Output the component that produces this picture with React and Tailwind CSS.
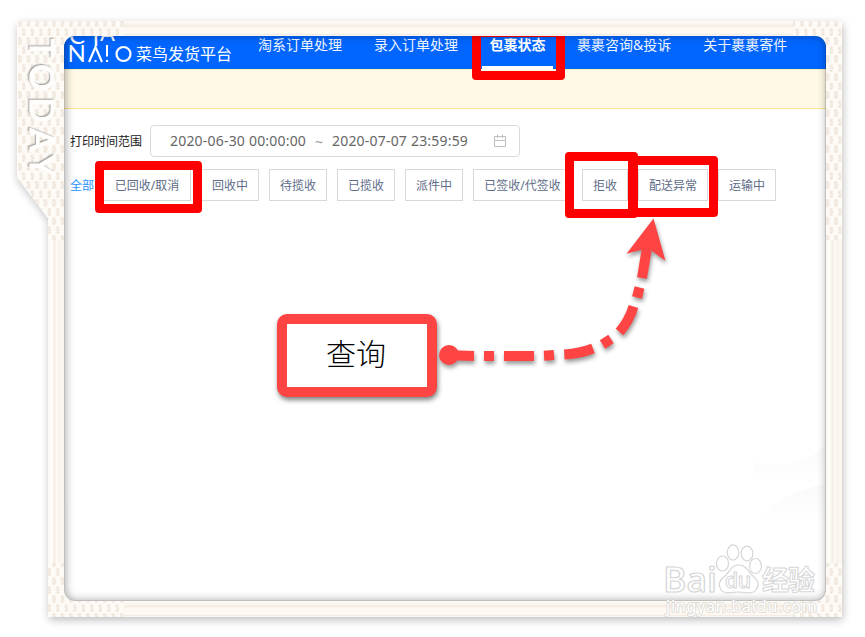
import React from "react"
import clsx from "clsx"

const navItems = [
  { label: "淘系订单处理", space: "ml-0" },
  { label: "录入订单处理", space: "ml-8" },
  { label: "包裹状态", space: "ml-[24px]", active: true },
  { label: "裹裹咨询&投诉", space: "ml-6" },
  { label: "关于裹裹寄件", space: "ml-8" },
]

const filters = [
  { label: "已回收/取消", width: "w-[88px]" },
  { label: "回收中", width: "w-[58px]" },
  { label: "待揽收", width: "w-[58px]" },
  { label: "已揽收", width: "w-[58px]" },
  { label: "派件中", width: "w-[58px]" },
  { label: "已签收/代签收", width: "w-[99px]" },
  { label: "拒收", width: "w-[46px]" },
  { label: "配送异常", width: "w-[70px]" },
  { label: "运输中", width: "w-[58px]" },
]

// Paper photo frame around the page
function PhotoFrame() {
  const outline =
    "M19 21H840Q842 21 842 23V615Q842 617 840 617H50Q48 617 48 615V218L17 177V23Q17 21 19 21Z"
  return (
    <svg className="absolute inset-0" width="865" height="637" viewBox="0 0 865 637">
      <defs>
        <filter id="frameShadow" x="-5%" y="-5%" width="110%" height="112%">
          <feDropShadow dx="1" dy="3" stdDeviation="4" floodColor="#000" floodOpacity="0.26" />
        </filter>
        {/* offsets follow the rotated letters: the shade falls up and to the left */}
        <filter id="letterShadow" x="-10%" y="-30%" width="120%" height="160%">
          <feDropShadow dx="-1.3" dy="1.3" stdDeviation="0.7" floodColor="#777" floodOpacity="0.6" />
        </filter>
        <pattern id="weave" width="8.500" height="18" patternUnits="userSpaceOnUse">
          <g fill="#f5eee6">
            <rect x="1" y="1" width="4" height="8" rx="1" />
            <rect x="5.200" y="10" width="3.300" height="8" rx="1" />
          </g>
          <g fill="#e8ddd1">
            <rect x="1.500" y="2" width="1" height="1.500" />
            <rect x="3.500" y="4" width="1" height="1.500" />
            <rect x="2" y="6.500" width="1.500" height="1" />
            <rect x="5.500" y="11.500" width="1" height="1.500" />
            <rect x="7.200" y="13.500" width="1" height="1.500" />
            <rect x="6" y="16" width="1.500" height="1" />
          </g>
        </pattern>
        <linearGradient id="grainX" x1="0" x2="1" y1="0" y2="0">
          <stop offset="0" stopColor="#fbf8f3" />
          <stop offset="0.2" stopColor="#fffefa" />
          <stop offset="0.3" stopColor="#fcf8f2" />
          <stop offset="0.42" stopColor="#f4ede5" />
          <stop offset="0.52" stopColor="#fefaf4" />
          <stop offset="0.75" stopColor="#f8f2ea" />
          <stop offset="0.88" stopColor="#fdf9f3" />
          <stop offset="1" stopColor="#f7f1ea" />
        </linearGradient>
        <linearGradient id="grainY" x1="0" x2="0" y1="0" y2="1">
          <stop offset="0" stopColor="#fefcf7" />
          <stop offset="0.22" stopColor="#f9f4ed" />
          <stop offset="0.32" stopColor="#f3ebe1" />
          <stop offset="0.45" stopColor="#fdf8f0" />
          <stop offset="0.8" stopColor="#fffbf5" />
          <stop offset="0.9" stopColor="#f4ede5" />
          <stop offset="1" stopColor="#fdf9f4" />
        </linearGradient>
      </defs>
      <path d={outline} fill="#fefbf7" filter="url(#frameShadow)" />
      <path d={outline} fill="url(#weave)" />
      <rect x="124" y="21" width="669" height="15" fill="url(#grainY)" />
      <rect x="124" y="601" width="669" height="16" fill="url(#grainY)" />
      <rect x="48" y="240" width="16" height="323" fill="url(#grainX)" />
      <rect x="826" y="240" width="16" height="323" fill="url(#grainX)" />
      <text
        transform="translate(30 39) rotate(90)"
        textLength="137"
        fontFamily="Lato, sans-serif"
        fontSize="33"
        fill="#fffefc"
        stroke="#fffefc"
        strokeWidth="1.200"
        filter="url(#letterShadow)"
      >
        TODAY
      </text>
    </svg>
  )
}

function Logo() {
  return (
    <svg
      width="71"
      height="33"
      viewBox="64 36 71 33"
      className="shrink-0"
      fill="#fff"
      fontFamily="Lato, sans-serif"
      fontSize="24"
    >
      <text x="69" y="43.500">C</text>
      <text x="92.500" y="45.500">I</text>
      <text x="100" y="40.500" fontSize="22">A</text>
      <text x="67.600" y="62">N</text>
      <path d="M89 62L95.500 47L102 62" fill="none" stroke="#fff" strokeWidth="2.100" />
      <path d="M106 45h2v11.500h-2zM106 60h2v2h-2zM94.500 60h2v2h-2z" />
      <circle cx="123.500" cy="54" r="7" fill="none" stroke="#fff" strokeWidth="2.200" />
    </svg>
  )
}

function CalendarIcon() {
  return (
    <svg width="14" height="14" viewBox="0 0 14 14" fill="none" stroke="#bfbfbf">
      <path d="M1.500 2.500H12.500V12.500H1.500ZM1.500 6.500H12.500M4.500 0.500V4M9.500 0.500V4" />
    </svg>
  )
}

function Header() {
  return (
    <header className="flex h-[33px] bg-[#0066ff] text-white">
      <Logo />
      <span className="mt-1.5 ml-px w-[122px] shrink-0 text-[16px] leading-6 whitespace-nowrap">
        菜鸟发货平台
      </span>
      <nav className="flex">
        {navItems.map((item) => (
          <a
            key={item.label}
            className={clsx(
              "flex h-[34px] flex-col justify-between text-[14px] leading-[18px] whitespace-nowrap",
              item.space,
              item.active ? "w-[71px] items-center font-bold" : "text-[#f2f7ff]"
            )}
          >
            <span>{item.label}</span>
            {item.active && <i className="relative z-10 block h-1 w-full shrink-0 bg-white" />}
          </a>
        ))}
      </nav>
    </header>
  )
}

function Watermark() {
  return (
    <svg className="absolute inset-0" width="865" height="637" viewBox="0 0 865 637">
      <defs>
        <linearGradient id="swoosh" x1="0" x2="0" y1="0" y2="1">
          <stop offset="0" stopColor="#000" stopOpacity="0.022" />
          <stop offset="1" stopColor="#000" stopOpacity="0" />
        </linearGradient>
      </defs>
      <path d="M754 462Q795 474 825 446V484H754Z" fill="url(#swoosh)" />
      <path d="M754 525Q772 496 825 484V525Z" fill="url(#swoosh)" />
      <g fill="#fff" stroke="#d6d6d6" strokeWidth="1.200">
        <text x="663" y="592" textLength="54" fontFamily="Open Sans, sans-serif" fontSize="34" fontWeight="600" lengthAdjust="spacingAndGlyphs">
          Bai
        </text>
        <ellipse cx="722.500" cy="563.500" rx="6" ry="7.500" />
        <ellipse cx="733" cy="552.500" rx="5.700" ry="7.700" />
        <ellipse cx="747" cy="553.500" rx="5.900" ry="7.400" />
        <ellipse cx="755.500" cy="566" rx="5.900" ry="7.500" />
        <path d="M738.500 565C731 565 730 572 725 576C719 580 718 585 721 590C725 595 732 592 738.500 592C745 592 752 595 756 590C760 585 758 580 753 576C748 572 747 565 738.500 565Z" />
        <text x="725" y="588" textLength="26" fontFamily="Open Sans, sans-serif" fontSize="21" fontWeight="600" strokeWidth="1">
          du
        </text>
        <text x="762" y="590" textLength="53" fontFamily="Noto Sans CJK SC, sans-serif" fontSize="27" fontWeight="bold" strokeWidth="1">
          经验
        </text>
        <text x="666" y="612" textLength="151" fontFamily="Noto Sans, sans-serif" fontSize="16" stroke="#dcd8d3" strokeWidth="1.600" paintOrder="stroke">
          jingyan.baidu.com
        </text>
      </g>
    </svg>
  )
}

function Arrow() {
  return (
    <svg
      className="absolute inset-0 drop-shadow-[1px_3px_2px_rgba(0,0,0,0.4)]"
      width="865"
      height="637"
      viewBox="0 0 865 637"
    >
      <g fill="none" stroke="#ff4444" strokeWidth="10">
        <path d="M452 355.300L474 356" />
        <path d="M484 356H494M504 356H534M544 355.700L554 355" />
        <path d="M564.300 354.500Q580 353.500 593 348.500" />
        <path d="M602.500 344.500L611 339" />
        <path d="M619.500 332Q629 321 633.500 306.500" />
        <path d="M637 297.500L639.500 287.500" />
        <path d="M642 278L647.300 246" />
      </g>
      <circle cx="449" cy="355" r="10" fill="#ff4444" />
      <path d="M653.500 218.500L665.500 261L648 248L626.500 253.800Z" fill="#ff4444" />
    </svg>
  )
}

function Marks() {
  return (
    <>
      <div className="absolute top-[28px] left-[472px] h-[52px] w-[93px] rounded-[4px] border-[9px] border-[#ff0000] [clip-path:inset(8px_0_0_0)]" />
      <div className="absolute top-[161px] left-[95px] h-[52px] w-[107px] rounded-[4px] border-[9px] border-[#ff0000]" />
      <div className="absolute top-[156px] left-[629px] h-[61px] w-[89px] rounded-[4px] border-[9px] border-[#ff0000]" />
      <div className="absolute top-[152px] left-[565px] h-[66px] w-[73px] rounded-[4px] border-[9px] border-r-[10px] border-[#ff0000]" />
      <div className="absolute top-[314px] left-[277px] flex h-[83px] w-[160px] items-center justify-center rounded-[10px] border-[10px] border-[#ff4444] bg-white pr-0.5 pb-1 text-[30px] font-light text-black shadow-[1px_3px_5px_rgba(0,0,0,0.5)]">
        查询
      </div>
    </>
  )
}

export default function App() {
  return (
    <div className="relative h-[637px] w-[865px] overflow-hidden bg-white pt-[36px] pl-[64px] font-['Noto_Sans','Noto_Sans_CJK_SC',sans-serif]">
      <PhotoFrame />
      <main className="relative h-[565px] w-[762px] overflow-hidden rounded-[11px] bg-white">
        <Header />
        <div className="h-10 border-y border-t-[#fff0b8] border-b-[#ffe58f] bg-[#fff9e6]" />

        <div className="mt-4 flex items-center pl-1.5 text-[12px]">
          <label className="w-20 pt-0.5 whitespace-nowrap text-[#222]">打印时间范围</label>
          <div className="flex h-8 w-[370px] items-center rounded-[4px] border border-[#d9d9d9] pr-3 pl-[19px] text-[14px] text-[#666]">
            <span className="w-[145px] pb-0.5 whitespace-nowrap tracking-[0.2px]">2020-06-30 00:00:00</span>
            <span className="w-[17px] text-[14px] text-[#999]">~</span>
            <span className="w-[161px] pb-0.5 whitespace-nowrap tracking-[0.2px]">2020-07-07 23:59:59</span>
            <CalendarIcon />
          </div>
        </div>

        <div className="mt-3 flex items-center gap-2.5 pl-1.5 text-[12px] text-[#606c88]">
          <span className="w-[23px] shrink-0 pt-0.5 whitespace-nowrap text-[#2593fc]">全部</span>
          {filters.map((f) => (
            <button
              key={f.label}
              className={clsx(
                "flex h-8 shrink-0 items-center justify-center border border-[#d9d9d9] bg-white pt-0.5 whitespace-nowrap",
                f.width
              )}
            >
              {f.label}
            </button>
          ))}
        </div>
      </main>
      <Marks />
      <Arrow />
      {/* inner edge of the frame */}
      <div className="absolute top-[36px] left-[64px] h-[565px] w-[762px] rounded-[11px] border-r border-b border-l border-black/25 shadow-[inset_1px_0_9px_rgba(0,0,0,0.32)]" />
      <Watermark />
    </div>
  )
}
